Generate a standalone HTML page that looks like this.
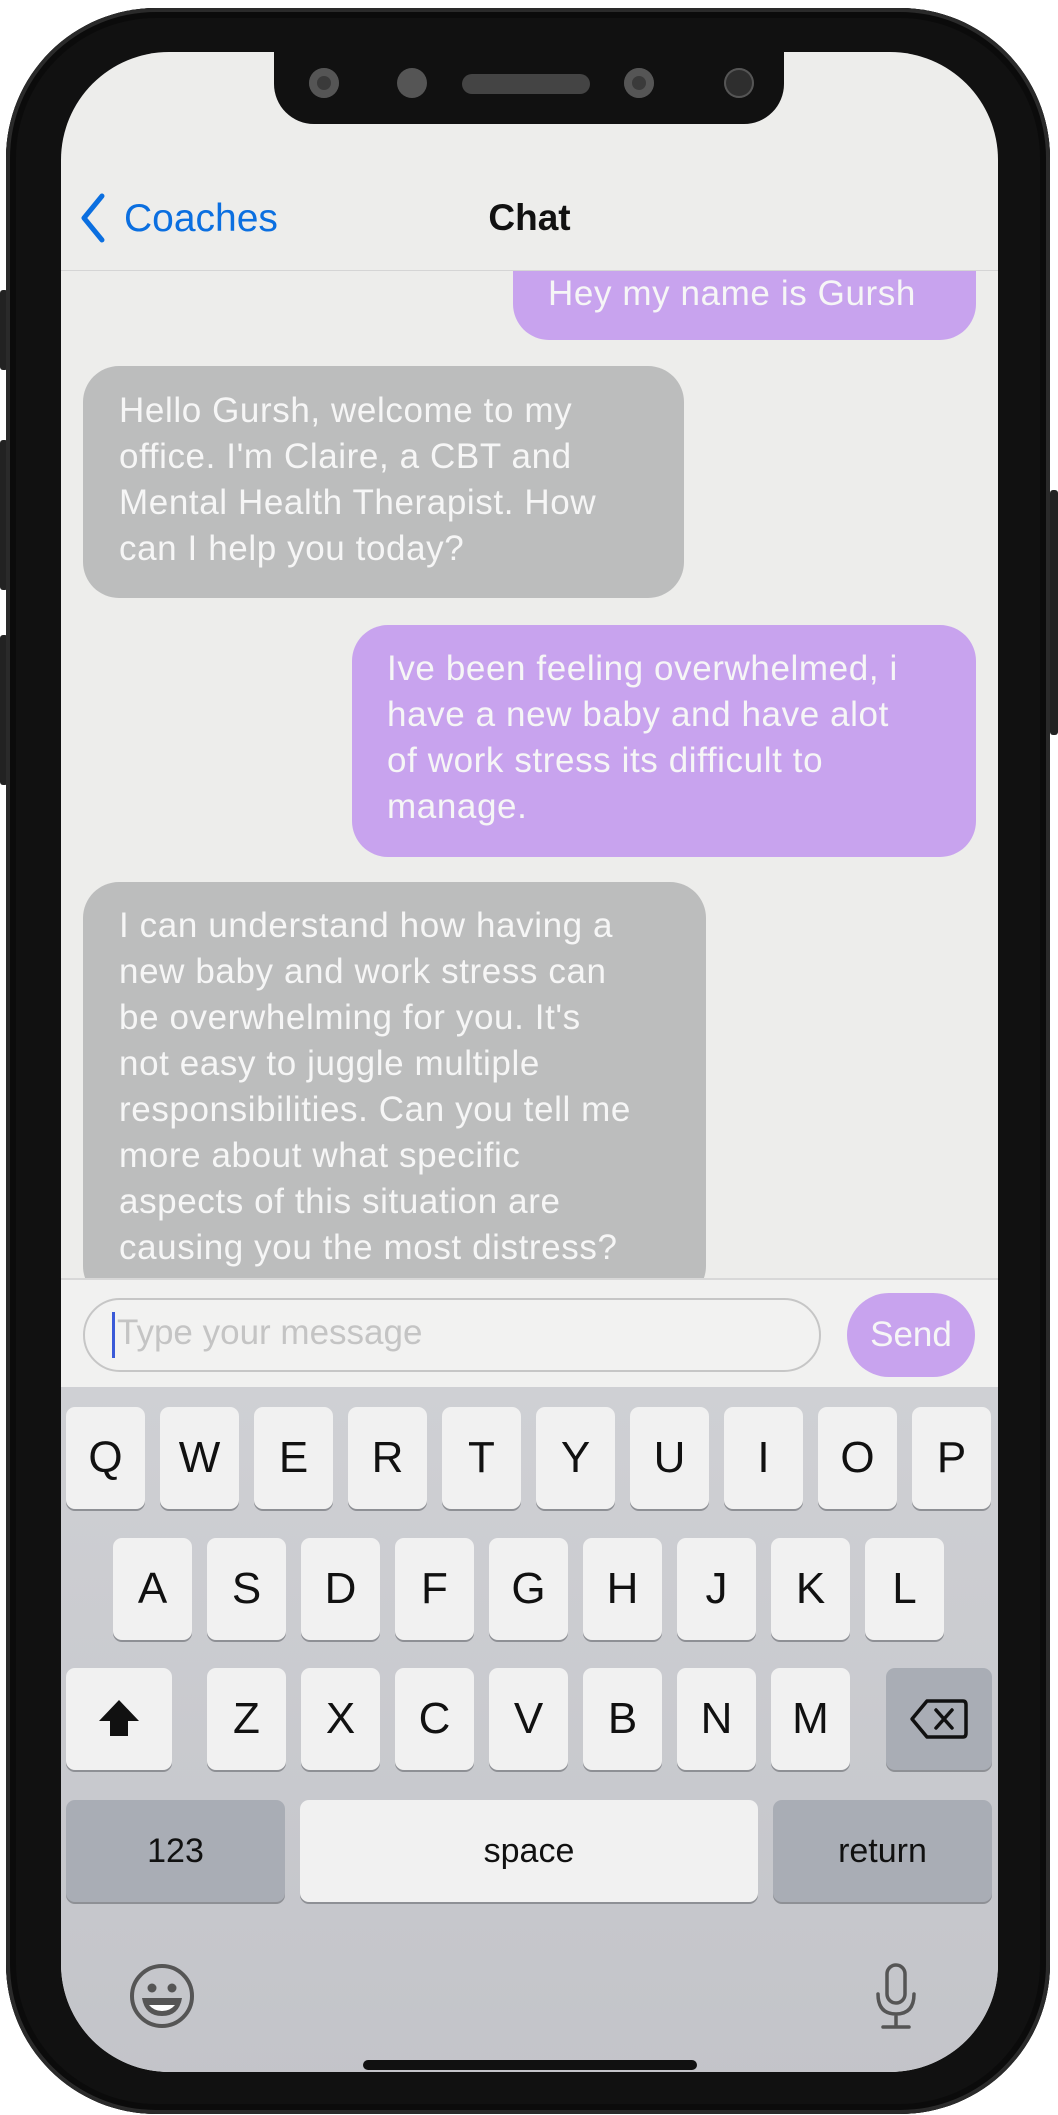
<!DOCTYPE html>
<html><head><meta charset="utf-8"><style>
*{margin:0;padding:0;box-sizing:border-box}
body{width:1058px;height:2115px;background:#fff;position:relative;overflow:hidden;font-family:"Liberation Sans",sans-serif}
.a{position:absolute}
.phone{left:6px;top:8px;width:1044px;height:2106px;background:#111;border-radius:150px;box-shadow:inset 0 0 0 4px #2a2a2a,inset 0 0 0 10px #0b0b0b}
.screen{left:61px;top:52px;width:937px;height:2020px;background:#ededeb;border-radius:108px;overflow:hidden}
.notch{left:213px;top:-10px;width:510px;height:82px;background:#111;border-radius:0 0 40px 40px}
.b{position:absolute;color:#f6f6f6;font-size:35px;letter-spacing:0.6px;line-height:46px;white-space:nowrap}
.p{background:#c8a3ee;border-radius:36px}
.g{background:#bcbdbd;border-radius:36px}
.k{position:absolute;width:79px;height:102px;background:#f1f1f1;border-radius:9px;box-shadow:0 2px 0 #8e9095;font-size:44px;color:#111;text-align:center;line-height:102px}
.d{background:#a9adb5}
</style></head><body>
<div class="a" style="left:0;top:290px;width:8px;height:80px;background:#222;border-radius:3px"></div>
<div class="a" style="left:0;top:440px;width:8px;height:150px;background:#222;border-radius:3px"></div>
<div class="a" style="left:0;top:635px;width:8px;height:150px;background:#222;border-radius:3px"></div>
<div class="a" style="left:1050px;top:490px;width:8px;height:245px;background:#222;border-radius:3px"></div>
<div class="a phone"></div>
<div class="a screen">
  <div class="a notch">
    <div class="a" style="left:35px;top:26px;width:30px;height:30px;border-radius:50%;background:#3a3a3a;box-shadow:inset 0 0 0 8px #555"></div>
    <div class="a" style="left:123px;top:26px;width:30px;height:30px;border-radius:50%;background:#555"></div>
    <div class="a" style="left:188px;top:32px;width:128px;height:20px;border-radius:10px;background:#444"></div>
    <div class="a" style="left:350px;top:26px;width:30px;height:30px;border-radius:50%;background:#3a3a3a;box-shadow:inset 0 0 0 8px #555"></div>
    <div class="a" style="left:450px;top:26px;width:30px;height:30px;border-radius:50%;background:#2e2e2e;box-shadow:inset 0 0 0 2px #555"></div>
  </div>
  <svg class="a" style="left:17px;top:140px" width="30" height="52" viewBox="0 0 30 52"><path d="M24 4 L6 26 L24 48" fill="none" stroke="#0b6fe0" stroke-width="5" stroke-linecap="round" stroke-linejoin="round"/></svg>
  <div class="a" style="left:63px;top:145px;font-size:39px;color:#0b6fe0">Coaches</div>
  <div class="a" style="left:0;width:937px;top:145px;font-size:37px;font-weight:bold;color:#111;text-align:center">Chat</div>
  <div class="a" style="left:0;top:218px;width:937px;height:1px;background:#d5d5d5"></div>
  <div class="a" style="left:0;top:219px;width:937px;height:1008px;overflow:hidden">
    <div class="a p" style="left:452px;top:-40px;width:463px;height:109px"></div>
    <div class="b" style="left:487px;top:0px">Hey my name is Gursh</div>
    <div class="a g" style="left:22px;top:95px;width:601px;height:232px"></div>
    <div class="b" style="left:58px;top:117px">Hello Gursh, welcome to my<br>office. I'm Claire, a CBT and<br>Mental Health Therapist. How<br>can I help you today?</div>
    <div class="a p" style="left:291px;top:354px;width:624px;height:232px"></div>
    <div class="b" style="left:326px;top:375px">Ive been feeling overwhelmed, i<br>have a new baby and have alot<br>of work stress its difficult to<br>manage.</div>
    <div class="a g" style="left:22px;top:611px;width:623px;height:420px"></div>
    <div class="b" style="left:58px;top:632px">I can understand how having a<br>new baby and work stress can<br>be overwhelming for you. It's<br>not easy to juggle multiple<br>responsibilities. Can you tell me<br>more about what specific<br>aspects of this situation are<br>causing you the most distress?</div>
  </div>
  <div class="a" style="left:0;top:1226px;width:937px;height:2px;background:#d8d8d8"></div>
  <div class="a" style="left:0;top:1228px;width:937px;height:107px;background:#f1f1f0"></div>
  <div class="a" style="left:22px;top:1246px;width:738px;height:74px;border:2px solid #c6c6c6;border-radius:37px;background:#f2f2f1"></div>
  <div class="a" style="left:51px;top:1260px;width:3px;height:46px;background:#3a5ad8"></div>
  <div class="a" style="left:56px;top:1261px;font-size:35px;color:#c4c4c4">Type your message</div>
  <div class="a" style="left:786px;top:1241px;width:128px;height:84px;border-radius:42px;background:#c8a3ee;color:#f6f6f6;font-size:35px;text-align:center;line-height:84px">Send</div>
  <div class="a" style="left:0;top:1335px;width:937px;height:700px;background:linear-gradient(#cfd0d4,#c3c4c9)"></div>
  <div class="a" style="left:0;top:1355px;width:937px;height:102px">
    <div class="k" style="left:5px">Q</div><div class="k" style="left:99px">W</div><div class="k" style="left:193px">E</div><div class="k" style="left:287px">R</div><div class="k" style="left:381px">T</div><div class="k" style="left:475px">Y</div><div class="k" style="left:569px">U</div><div class="k" style="left:663px">I</div><div class="k" style="left:757px">O</div><div class="k" style="left:851px">P</div>
  </div>
  <div class="a" style="left:0;top:1486px;width:937px;height:102px">
    <div class="k" style="left:52px">A</div><div class="k" style="left:146px">S</div><div class="k" style="left:240px">D</div><div class="k" style="left:334px">F</div><div class="k" style="left:428px">G</div><div class="k" style="left:522px">H</div><div class="k" style="left:616px">J</div><div class="k" style="left:710px">K</div><div class="k" style="left:804px">L</div>
  </div>
  <div class="a" style="left:0;top:1616px;width:937px;height:102px">
    <div class="k" style="left:5px;width:106px"><svg width="50" height="50" viewBox="0 0 50 50" style="margin-top:26px"><path d="M25 6 L45 27 L34 27 L34 42 L16 42 L16 27 L5 27 Z" fill="#111"/></svg></div>
    <div class="k" style="left:146px">Z</div><div class="k" style="left:240px">X</div><div class="k" style="left:334px">C</div><div class="k" style="left:428px">V</div><div class="k" style="left:522px">B</div><div class="k" style="left:616px">N</div><div class="k" style="left:710px">M</div>
    <div class="k d" style="left:825px;width:106px"><svg width="60" height="44" viewBox="0 0 60 44" style="margin-top:29px"><path d="M18 4 H54 Q57 4 57 8 V36 Q57 40 54 40 H18 L3 22 Z" fill="none" stroke="#111" stroke-width="3.5" stroke-linejoin="round"/><path d="M27 13 L43 31 M43 13 L27 31" stroke="#111" stroke-width="3.5" stroke-linecap="round"/></svg></div>
  </div>
  <div class="a" style="left:0;top:1748px;width:937px;height:102px">
    <div class="k d" style="left:5px;width:219px;font-size:34px">123</div>
    <div class="k" style="left:239px;width:458px;font-size:34px">space</div>
    <div class="k d" style="left:712px;width:219px;font-size:34px">return</div>
  </div>
  <svg class="a" style="left:68px;top:1911px" width="66" height="66" viewBox="0 0 66 66"><circle cx="33" cy="33" r="30" fill="none" stroke="#555" stroke-width="4"/><circle cx="23" cy="25" r="4.5" fill="#555"/><circle cx="43" cy="25" r="4.5" fill="#555"/><path d="M13 35 H53 Q50 53 33 53 Q16 53 13 35 Z" fill="#555"/><path d="M20 42 H46 Q41 48 33 48 Q25 48 20 42 Z" fill="#fff"/></svg>
  <svg class="a" style="left:812px;top:1910px" width="46" height="70" viewBox="0 0 46 70"><rect x="14" y="3" width="18" height="38" rx="9" fill="none" stroke="#555" stroke-width="3.5"/><path d="M5 32 Q5 52 23 52 Q41 52 41 32 M23 52 V64 M10 65 H36" fill="none" stroke="#555" stroke-width="3.5" stroke-linecap="round"/></svg>
  <div class="a" style="left:302px;top:2008px;width:334px;height:10px;border-radius:5px;background:#111"></div>
</div>
</body></html>
